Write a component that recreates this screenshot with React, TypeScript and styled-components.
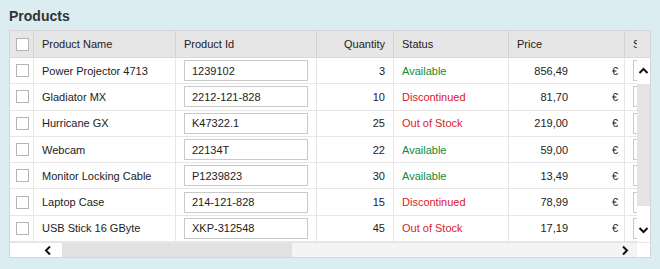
import React from "react";
import styled, { createGlobalStyle } from "styled-components";

const Global = createGlobalStyle`
  html, body { margin: 0; padding: 0; }
  body {
    background: #dcedf1;
    font-family: "Liberation Sans", Arial, sans-serif;
    color: #222;
  }
`;

const COLS = "24px 142px 141px 77px 115px 116px 120px";

const Page = styled.div`
  padding: 8px 9px 0 9px;
`;

const Title = styled.h2`
  margin: 0 0 6px 0;
  font-size: 14px;
  line-height: 16px;
  font-weight: bold;
  color: #333;
`;

const Grid = styled.div`
  width: 642px;
  box-sizing: border-box;
  border: 1px solid #d6d6d6;
  background: #fff;
  display: flex;
  flex-direction: column;
`;

const HeaderBar = styled.div`
  display: flex;
  height: 27px;
  background: #e6e6e6;
  border-bottom: 1px solid #d8d8d8;
  box-sizing: border-box;
`;

const Clip = styled.div`
  flex: 1;
  overflow: hidden;
  min-width: 0;
`;

const Row = styled.div<{ $h: string }>`
  display: grid;
  grid-template-columns: ${COLS};
  width: max-content;
  height: ${(p) => p.$h};
  box-sizing: border-box;
`;

const HeadCell = styled.div<{ $align?: string }>`
  display: flex;
  align-items: center;
  justify-content: ${(p) => p.$align || "flex-start"};
  padding: 0 8px;
  border-right: 1px solid #d3d3d3;
  font-size: 11px;
  color: #222;
  white-space: nowrap;
  overflow: hidden;
`;

const CheckCell = styled.div<{ $head?: boolean }>`
  display: flex;
  align-items: center;
  padding-left: 6px;
  border-right: 1px solid ${(p) => (p.$head ? "#d3d3d3" : "#e6e6e6")};
`;

const Box = styled.span`
  width: 13px;
  height: 13px;
  box-sizing: border-box;
  border: 1px solid #b5b5b5;
  background: #fff;
  display: block;
`;

const Body = styled.div`
  display: flex;
`;

const BodyRow = styled(Row)`
  border-bottom: 1px solid #e6e6e6;
`;

const Cell = styled.div<{ $align?: string; $color?: string }>`
  display: flex;
  align-items: center;
  justify-content: ${(p) => p.$align || "flex-start"};
  padding: 0 8px;
  border-right: 1px solid #e6e6e6;
  font-size: 11px;
  color: ${(p) => p.$color || "#222"};
  white-space: nowrap;
  overflow: hidden;
`;

const PriceCell = styled(Cell)`
  padding: 0 6px 0 8px;
`;

const Currency = styled.span`
  width: 50px;
  text-align: right;
`;

const Input = styled.div`
  width: 124px;
  height: 21px;
  flex: none;
  box-sizing: border-box;
  border: 1px solid #c9c9c9;
  padding: 0 7px;
  display: flex;
  align-items: center;
  font-size: 11px;
  color: #222;
  background: #fff;
`;

const VScroll = styled.div`
  width: 13px;
  flex: none;
  display: flex;
  flex-direction: column;
  background: #fff;
`;

const VButton = styled.div`
  height: 26px;
  display: flex;
  align-items: center;
  justify-content: center;
  background: #fff;
`;

const VThumb = styled.div`
  height: 122px;
  background: #e4e4e4;
`;

const VTrack = styled.div`
  flex: 1;
  background: #fff;
`;

const HeadCorner = styled.div`
  width: 13px;
  flex: none;
  background: #e6e6e6;
`;

const HScroll = styled.div`
  display: flex;
  height: 15px;
  border-top: 1px solid #e6e6e6;
  box-sizing: border-box;
`;

const HFrozen = styled.div`
  width: 25px;
  background: #fff;
`;

const HButton = styled.div`
  width: 27px;
  display: flex;
  align-items: center;
  justify-content: center;
  background: #fff;
`;

const HTrack = styled.div`
  flex: 1;
  display: flex;
  background: #f4f4f4;
  justify-content: space-between;
`;

const HThumb = styled.div`
  width: 230px;
  background: #e1e1e1;
`;

const HRightBtn = styled.div`
  width: 26px;
  display: flex;
  align-items: center;
  justify-content: center;
`;

const Corner = styled.div`
  width: 13px;
  background: #fff;
`;

const Chevron = ({ dir }: { dir: "up" | "down" | "left" | "right" }) => {
  const d =
    dir === "up"
      ? "M1.5 7 L5.5 3 L9.5 7"
      : dir === "down"
      ? "M1.5 4 L5.5 8 L9.5 4"
      : dir === "left"
      ? "M7 1.5 L3 5.5 L7 9.5"
      : "M4 1.5 L8 5.5 L4 9.5";
  return (
    <svg width="11" height="11" viewBox="0 0 11 11">
      <path d={d} fill="none" stroke="#111" strokeWidth="2" />
    </svg>
  );
};

type Item = {
  name: string;
  id: string;
  qty: number;
  status: "Available" | "Discontinued" | "Out of Stock";
  price: string;
};

const items: Item[] = [
  { name: "Power Projector 4713", id: "1239102", qty: 3, status: "Available", price: "856,49" },
  { name: "Gladiator MX", id: "2212-121-828", qty: 10, status: "Discontinued", price: "81,70" },
  { name: "Hurricane GX", id: "K47322.1", qty: 25, status: "Out of Stock", price: "219,00" },
  { name: "Webcam", id: "22134T", qty: 22, status: "Available", price: "59,00" },
  { name: "Monitor Locking Cable", id: "P1239823", qty: 30, status: "Available", price: "13,49" },
  { name: "Laptop Case", id: "214-121-828", qty: 15, status: "Discontinued", price: "78,99" },
  { name: "USB Stick 16 GByte", id: "XKP-312548", qty: 45, status: "Out of Stock", price: "17,19" },
];

const statusColor = (s: Item["status"]) => (s === "Available" ? "#138a36" : "#d9202a");

export default function App() {
  return (
    <>
      <Global />
      <Page>
        <Title>Products</Title>
        <Grid>
          <HeaderBar>
            <Clip>
              <Row $h="26px">
                <CheckCell $head>
                  <Box />
                </CheckCell>
                <HeadCell>Product Name</HeadCell>
                <HeadCell>Product Id</HeadCell>
                <HeadCell $align="flex-end">Quantity</HeadCell>
                <HeadCell>Status</HeadCell>
                <HeadCell>Price</HeadCell>
                <HeadCell>Supplier</HeadCell>
              </Row>
            </Clip>
            <HeadCorner />
          </HeaderBar>
          <Body>
            <Clip>
              {items.map((it) => (
                <BodyRow $h="26.3px" key={it.name}>
                  <CheckCell>
                    <Box />
                  </CheckCell>
                  <Cell>{it.name}</Cell>
                  <Cell>
                    <Input>{it.id}</Input>
                  </Cell>
                  <Cell $align="flex-end">{it.qty}</Cell>
                  <Cell $color={statusColor(it.status)}>{it.status}</Cell>
                  <PriceCell $align="flex-end">
                    <span>{it.price}</span>
                    <Currency>€</Currency>
                  </PriceCell>
                  <Cell>
                    <Input />
                  </Cell>
                </BodyRow>
              ))}
            </Clip>
            <VScroll>
              <VButton>
                <Chevron dir="up" />
              </VButton>
              <VThumb />
              <VTrack />
              <VButton>
                <Chevron dir="down" />
              </VButton>
            </VScroll>
          </Body>
          <HScroll>
            <HFrozen />
            <HButton>
              <Chevron dir="left" />
            </HButton>
            <HTrack>
              <HThumb />
              <HRightBtn>
                <Chevron dir="right" />
              </HRightBtn>
            </HTrack>
            <Corner />
          </HScroll>
        </Grid>
      </Page>
    </>
  );
}
